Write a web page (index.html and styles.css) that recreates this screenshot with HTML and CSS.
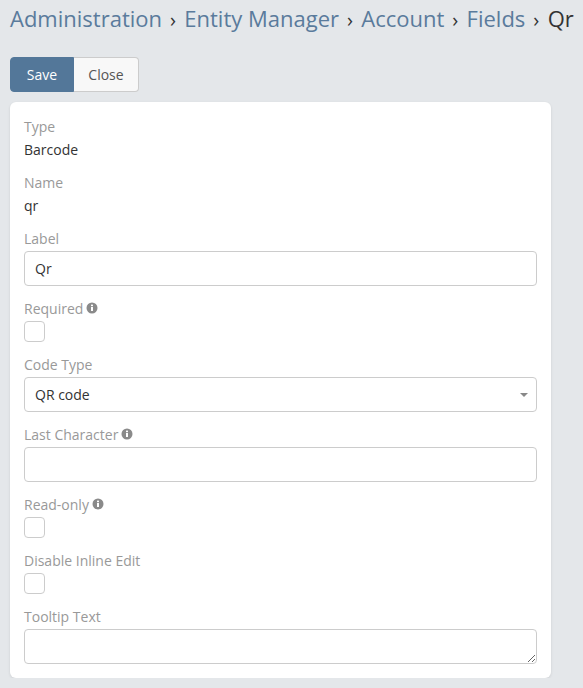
FILE: index.html
```html
<!DOCTYPE html>
<html lang="en">
<head>
  <meta charset="UTF-8">
  <meta name="viewport" content="width=device-width, initial-scale=1.0">
  <title>Qr - Fields</title>
  <link rel="stylesheet" href="styles.css">
</head>
<body>
  <h1 class="breadcrumbs">
    <a href="#">Administration</a><span class="sep">›</span><a href="#">Entity Manager</a><span class="sep">›</span><a href="#">Account</a><span class="sep">›</span><a href="#">Fields</a><span class="sep">›</span><span class="current">Qr</span>
  </h1>

  <div class="button-group">
    <button type="button" class="btn btn-primary">Save</button>
    <button type="button" class="btn btn-default">Close</button>
  </div>

  <form class="panel">
    <div class="field">
      <div class="field-label">Type</div>
      <div class="field-value">Barcode</div>
    </div>
    <div class="field">
      <div class="field-label">Name</div>
      <div class="field-value">qr</div>
    </div>
    <div class="field">
      <label class="field-label" for="label">Label</label>
      <input class="form-control" type="text" id="label" value="Qr">
    </div>
    <div class="field">
      <label class="field-label" for="required">Required
        <svg class="info" viewBox="0 0 12 12"><circle cx="6" cy="6" r="5.5" fill="#8a8a8a"/><rect x="5" y="5" width="2" height="4" fill="#fff"/><rect x="5" y="2.6" width="2" height="1.6" fill="#fff"/></svg>
      </label>
      <input class="checkbox" type="checkbox" id="required">
    </div>
    <div class="field">
      <label class="field-label" for="code-type">Code Type</label>
      <div class="select-wrap">
        <select class="form-control" id="code-type">
          <option>QR code</option>
        </select>
      </div>
    </div>
    <div class="field">
      <label class="field-label" for="last-char">Last Character
        <svg class="info" viewBox="0 0 12 12"><circle cx="6" cy="6" r="5.5" fill="#8a8a8a"/><rect x="5" y="5" width="2" height="4" fill="#fff"/><rect x="5" y="2.6" width="2" height="1.6" fill="#fff"/></svg>
      </label>
      <input class="form-control" type="text" id="last-char">
    </div>
    <div class="field">
      <label class="field-label" for="read-only">Read-only
        <svg class="info" viewBox="0 0 12 12"><circle cx="6" cy="6" r="5.5" fill="#8a8a8a"/><rect x="5" y="5" width="2" height="4" fill="#fff"/><rect x="5" y="2.6" width="2" height="1.6" fill="#fff"/></svg>
      </label>
      <input class="checkbox" type="checkbox" id="read-only">
    </div>
    <div class="field">
      <label class="field-label" for="inline-edit">Disable Inline Edit</label>
      <input class="checkbox" type="checkbox" id="inline-edit">
    </div>
    <div class="field">
      <label class="field-label" for="tooltip">Tooltip Text</label>
      <textarea class="form-control" id="tooltip"></textarea>
    </div>
  </form>
</body>
</html>
```
FILE: styles.css
```css
* {
  box-sizing: border-box;
}

body {
  margin: 0;
  padding: 0 10px;
  background-color: #e4e7ea;
  color: #333;
  font-family: "Open Sans", Arial, sans-serif;
  font-size: 14px;
  line-height: 20px;
  overflow: hidden;
}

.breadcrumbs {
  margin: 0;
  padding-top: 3px;
  font-size: 22px;
  font-weight: 400;
  line-height: 30px;
  white-space: nowrap;
}

.breadcrumbs a {
  color: #5a7b9c;
  text-decoration: none;
}

.breadcrumbs .sep {
  margin: 0 8.25px 0 8px;
  color: #333;
  font-size: 20px;
}

.breadcrumbs .current {
  color: #333;
}

.button-group {
  display: flex;
  margin-top: 22px;
}

.btn {
  height: 35px;
  padding: 0 13px;
  border: 1px solid #ccc;
  font-family: inherit;
  font-size: 14px;
  cursor: pointer;
}

.btn-primary {
  width: 64px;
  background-color: #537799;
  border-color: #537799;
  border-radius: 4px 0 0 4px;
  color: #fff;
}

.btn-default {
  width: 65px;
  background-color: #f8f8f8;
  border-left: 0;
  border-radius: 0 4px 4px 0;
  color: #555;
}

.panel {
  margin-top: 10px;
  width: 541px;
  padding: 14px 14px;
  background-color: #fff;
  border-radius: 6px;
  box-shadow: 0 1px 3px rgba(0, 0, 0, 0.1);
}

.field {
  margin-bottom: 12px;
}

.field:last-child {
  margin-bottom: 0;
}

.field-label {
  display: block;
  height: 23px;
  line-height: 22px;
  color: #999;
}

.field-value {
  height: 21px;
  line-height: 21px;
}

.info {
  width: 12px;
  height: 12px;
  margin-left: -1px;
  vertical-align: 0;
}

.form-control {
  display: block;
  width: 100%;
  height: 35px;
  padding: 0 10px;
  border: 1px solid #ccc;
  border-radius: 4px;
  background-color: #fff;
  color: #333;
  font-family: inherit;
  font-size: 14px;
  outline: none;
}

textarea.form-control {
  padding: 6px 10px;
  resize: vertical;
}

select.form-control {
  appearance: none;
}

.select-wrap {
  position: relative;
}

.select-wrap::after {
  content: "";
  position: absolute;
  top: 16px;
  right: 9px;
  border-top: 4px solid #888;
  border-left: 4px solid transparent;
  border-right: 4px solid transparent;
  pointer-events: none;
}

.checkbox {
  display: block;
  appearance: none;
  width: 21px;
  height: 21px;
  margin: 0;
  border: 1px solid #ccc;
  border-radius: 4px;
  background-color: #fff;
}
```
